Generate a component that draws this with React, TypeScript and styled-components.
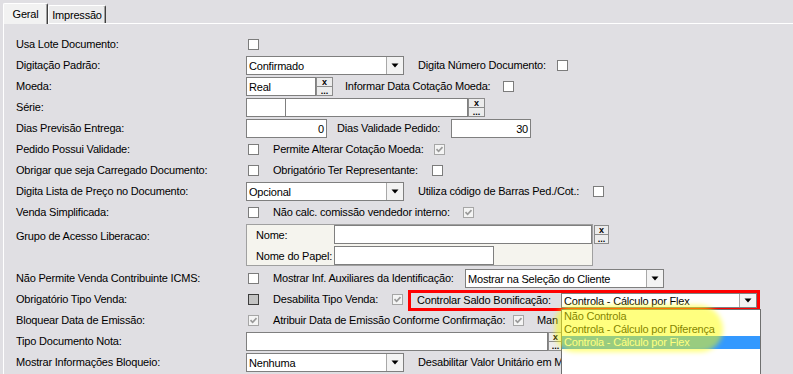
import React from "react";
import styled, { createGlobalStyle } from "styled-components";

const GlobalStyle = createGlobalStyle`
  html, body {
    margin: 0;
    padding: 0;
  }
  body {
    background: #e0dfe3;
    font-family: "Liberation Sans", Arial, sans-serif;
    font-size: 11px;
    letter-spacing: -0.2px;
    color: #000;
    overflow: hidden;
  }
`;

const Screen = styled.div`
  position: relative;
  width: 793px;
  height: 374px;
  overflow: hidden;
`;

// Tabs
const TabBar = styled.div`
  display: flex;
  align-items: flex-end;
  height: 23px;
  padding-left: 3px;
`;

const Tab = styled.div<{ $active?: boolean; $w: number }>`
  position: relative;
  z-index: ${(p) => (p.$active ? 1 : 0)};
  box-sizing: border-box;
  width: ${(p) => p.$w}px;
  height: ${(p) => (p.$active ? 21 : 18)}px;
  margin-bottom: ${(p) => (p.$active ? -1 : 0)}px;
  display: flex;
  align-items: center;
  justify-content: center;
  background: ${(p) => (p.$active ? "#f2f2f2" : "#ebebec")};
  border-top: 1px solid #fff;
  border-left: 1px solid #fff;
  border-right: 1px solid #404040;
  box-shadow: inset -1px 0 0 #a0a0a0;
  border-radius: 2px 2px 0 0;
`;

const Panel = styled.div`
  margin-left: 3px;
  border-top: 1px solid #fff;
  border-left: 1px solid #fff;
  padding-top: 10px;
  height: 360px;
`;

// Form rows
const Row = styled.div<{ $h?: number; $top?: boolean }>`
  display: flex;
  align-items: ${(p) => (p.$top ? "flex-start" : "center")};
  height: ${(p) => p.$h ?? 21}px;
`;

const RowLabel = styled.div<{ $mt?: number }>`
  flex: 0 0 242px;
  box-sizing: border-box;
  padding-left: 12px;
  margin-top: ${(p) => p.$mt ?? 0}px;
  white-space: nowrap;
  line-height: 13px;
`;

const Caption = styled.span<{ $ml?: number; $w?: number }>`
  flex: none;
  margin-left: ${(p) => p.$ml ?? 0}px;
  width: ${(p) => (p.$w ? `${p.$w}px` : "auto")};
  white-space: nowrap;
  line-height: 13px;
`;

const Box = styled.span<{ $ml?: number; $shade?: boolean; $dim?: boolean }>`
  flex: none;
  box-sizing: border-box;
  width: 11px;
  height: 11px;
  margin-left: ${(p) => p.$ml ?? 0}px;
  border: 1px solid
    ${(p) => (p.$shade ? "#3c3c3c" : p.$dim ? "#a6a6a6" : "#7c7c7c")};
  background: ${(p) => (p.$shade ? "#c3c3c3" : p.$dim ? "#f4f4f4" : "#fff")};
  display: flex;
  align-items: center;
  justify-content: center;
`;

const Field = styled.div<{ $w?: number; $ml?: number; $right?: boolean; $h?: number }>`
  flex: none;
  box-sizing: border-box;
  width: ${(p) => (p.$w ? `${p.$w}px` : "auto")};
  height: ${(p) => p.$h ?? 19}px;
  margin-left: ${(p) => p.$ml ?? 0}px;
  border: 1px solid #7f7f7f;
  background: #fff;
  padding: 0 2px;
  display: flex;
  align-items: center;
  justify-content: ${(p) => (p.$right ? "flex-end" : "flex-start")};
  white-space: nowrap;
  overflow: hidden;
`;

const ComboBox = styled(Field)`
  position: relative;
  padding-right: 0;
  overflow: visible;
`;

const ComboText = styled.span`
  flex: 1;
  overflow: hidden;
`;

const DropButton = styled.span`
  flex: none;
  align-self: stretch;
  width: 16px;
  border-left: 1px solid #a8a8a8;
  background: #f3f3f3;
  display: flex;
  align-items: center;
  justify-content: center;
`;

const Lookup = styled.div<{ $w?: number; $ml?: number; $mt?: number }>`
  flex: none;
  align-self: ${(p) => (p.$mt !== undefined ? "flex-start" : "center")};
  display: flex;
  flex-direction: column;
  width: ${(p) => p.$w ?? 17}px;
  height: 19px;
  margin-left: ${(p) => p.$ml ?? 0}px;
  margin-top: ${(p) => p.$mt ?? 0}px;
`;

const LookupBtn = styled.span<{ $low?: boolean }>`
  flex: 1;
  box-sizing: border-box;
  border: 1px solid #8c8c8c;
  background: #ececec;
  display: flex;
  justify-content: center;
  align-items: ${(p) => (p.$low ? "flex-end" : "center")};
  font-size: 9px;
  font-weight: bold;
  line-height: 7px;
  letter-spacing: 0;
  & + & {
    border-top: none;
  }
`;

const GroupBox = styled.div`
  flex: none;
  box-sizing: border-box;
  width: 347px;
  height: 42px;
  margin-top: 1px;
  border: 1px solid #a0a0a0;
  background: #f5f4ee;
  padding-left: 9px;
  display: grid;
  grid-template-columns: 78px 1fr;
  grid-auto-rows: 19px;
  row-gap: 2px;
  align-items: center;
`;

const RedFrame = styled.div`
  flex: none;
  box-sizing: border-box;
  width: 352px;
  height: 21px;
  margin-left: 5px;
  margin-top: 2px;
  border: 3px solid #ff0000;
  padding-left: 6px;
  display: flex;
  align-items: center;
`;

const DropList = styled.div`
  position: absolute;
  left: -1px;
  top: calc(100% + 2px);
  width: 200px;
  height: 72px;
  box-sizing: border-box;
  border: 1px solid #6f6f6f;
  background: #fff;
  z-index: 5;
`;

const Option = styled.div<{ $sel?: boolean }>`
  height: 13px;
  line-height: 13px;
  padding-left: 2px;
  white-space: nowrap;
  background: ${(p) => (p.$sel ? "#3399ff" : "transparent")};
  color: ${(p) => (p.$sel ? "#fff" : "#000")};
`;

const Marker = styled.div`
  position: absolute;
  left: 555px;
  top: 305px;
  width: 168px;
  height: 47px;
  border-radius: 20px 28px 26px 22px;
  background: rgba(255, 255, 0, 0.5);
  filter: blur(2.5px);
  pointer-events: none;
  z-index: 10;
`;

const Check = ({ ml = 0, checked = false, shade = false }: { ml?: number; checked?: boolean; shade?: boolean }) => (
  <Box $ml={ml} $shade={shade} $dim={checked}>
    {checked && (
      <svg width="9" height="9" viewBox="0 0 9 9">
        <path d="M1.5 4.2 L3.6 6.3 L7.5 2.2" fill="none" stroke="#9a9a9a" strokeWidth="1.7" />
      </svg>
    )}
  </Box>
);

const Arrow = () => (
  <svg width="8" height="5" viewBox="0 0 8 5">
    <path d="M0.5 0.5 H7.5 L4 4.5 Z" fill="#000" />
  </svg>
);

const Combo = ({ w, text, h, children }: { w: number; text: string; h?: number; children?: React.ReactNode }) => (
  <ComboBox $w={w} $h={h}>
    <ComboText>{text}</ComboText>
    <DropButton>
      <Arrow />
    </DropButton>
    {children}
  </ComboBox>
);

const LookupButtons = ({ w, ml, mt }: { w?: number; ml?: number; mt?: number }) => (
  <Lookup $w={w} $ml={ml} $mt={mt}>
    <LookupBtn>x</LookupBtn>
    <LookupBtn $low>...</LookupBtn>
  </Lookup>
);

const App = () => {
  return (
    <Screen>
      <GlobalStyle />
      <TabBar>
        <Tab $active $w={45}>Geral</Tab>
        <Tab $w={58}>Impressão</Tab>
      </TabBar>

      <Panel>
        <Row>
          <RowLabel>Usa Lote Documento:</RowLabel>
          <Check ml={2} />
        </Row>

        <Row>
          <RowLabel>Digitação Padrão:</RowLabel>
          <Combo w={158} text="Confirmado" />
          <Caption $ml={14} $w={139}>Digita Número Documento:</Caption>
          <Check />
        </Row>

        <Row>
          <RowLabel>Moeda:</RowLabel>
          <Field $w={70}>Real</Field>
          <LookupButtons w={17} />
          <Caption $ml={12} $w={158}>Informar Data Cotação Moeda:</Caption>
          <Check />
        </Row>

        <Row>
          <RowLabel>Série:</RowLabel>
          <Field $w={40} />
          <Field $w={183} $ml={-1} />
          <LookupButtons w={17} />
        </Row>

        <Row>
          <RowLabel>Dias Previsão Entrega:</RowLabel>
          <Field $w={81} $right>0</Field>
          <Caption $ml={10} $w={114}>Dias Validade Pedido:</Caption>
          <Field $w={80} $right>30</Field>
        </Row>

        <Row>
          <RowLabel>Pedido Possui Validade:</RowLabel>
          <Check ml={2} />
          <Caption $ml={14} $w={161}>Permite Alterar Cotação Moeda:</Caption>
          <Check checked />
        </Row>

        <Row>
          <RowLabel>Obrigar que seja Carregado Documento:</RowLabel>
          <Check ml={2} />
          <Caption $ml={14} $w={159}>Obrigatório Ter Representante:</Caption>
          <Check />
        </Row>

        <Row>
          <RowLabel>Digita Lista de Preço no Documento:</RowLabel>
          <Combo w={158} text="Opcional" />
          <Caption $ml={14} $w={175}>Utiliza código de Barras Ped./Cot.:</Caption>
          <Check />
        </Row>

        <Row>
          <RowLabel>Venda Simplificada:</RowLabel>
          <Check ml={2} />
          <Caption $ml={14} $w={190}>Não calc. comissão vendedor interno:</Caption>
          <Check checked />
        </Row>

        <Row $h={45} $top>
          <RowLabel $mt={7}>Grupo de Acesso Liberacao:</RowLabel>
          <GroupBox>
            <span>Nome:</span>
            <Field />
            <span>Nome do Papel:</span>
            <Field $w={160} />
          </GroupBox>
          <LookupButtons w={15} ml={1} mt={2} />
        </Row>

        <Row>
          <RowLabel>Não Permite Venda Contribuinte ICMS:</RowLabel>
          <Check ml={2} />
          <Caption $ml={14} $w={192}>Mostrar Inf. Auxiliares da Identificação:</Caption>
          <Combo w={199} text="Mostrar na Seleção do Cliente" />
        </Row>

        <Row>
          <RowLabel>Obrigatório Tipo Venda:</RowLabel>
          <Check ml={2} shade />
          <Caption $ml={14} $w={119}>Desabilita Tipo Venda:</Caption>
          <Check checked />
          <RedFrame>
            <Caption $w={144}>Controlar Saldo Bonificação:</Caption>
            <Combo w={196} h={15} text="Controla - Cálculo por Flex">
              <DropList>
                <Option>Não Controla</Option>
                <Option>Controla - Cálculo por Diferença</Option>
                <Option $sel>Controla - Cálculo por Flex</Option>
              </DropList>
            </Combo>
          </RedFrame>
        </Row>

        <Row>
          <RowLabel>Bloquear Data de Emissão:</RowLabel>
          <Check ml={2} checked />
          <Caption $ml={14} $w={240}>Atribuir Data de Emissão Conforme Confirmação:</Caption>
          <Check checked />
          <Caption $ml={13}>Man</Caption>
        </Row>

        <Row>
          <RowLabel>Tipo Documento Nota:</RowLabel>
          <Field $w={302} />
          <LookupButtons w={15} />
        </Row>

        <Row>
          <RowLabel>Mostrar Informações Bloqueio:</RowLabel>
          <Combo w={158} text="Nenhuma" />
          <Caption $ml={14}>Desabilitar Valor Unitário em M</Caption>
        </Row>
      </Panel>

      <Marker />
    </Screen>
  );
};

export default App;
